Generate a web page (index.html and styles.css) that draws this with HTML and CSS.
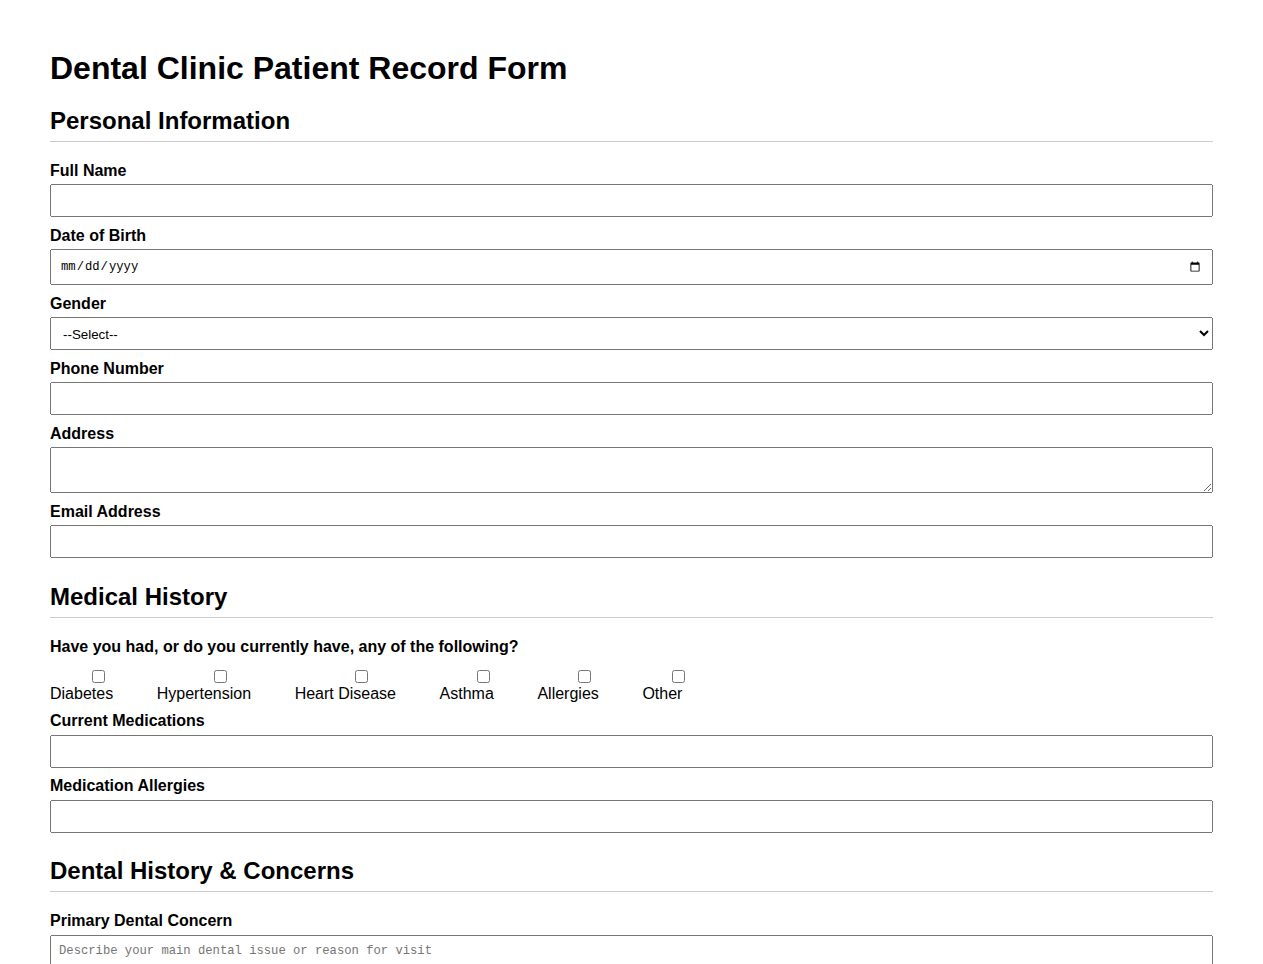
FILE: index.html
```html
<!DOCTYPE html>
<html lang="en">
<head>
<meta charset="utf-8">
<title>Dental Clinic Patient Record Form</title>
<link rel="stylesheet" href="styles.css">
</head>
<body>
<div class="page">
  <h1 class="title">Dental Clinic Patient Record Form</h1>
  <form class="form">
    <section class="section">
      <h2 class="section-title">Personal Information</h2>
      <div class="group">
        <label class="field-label" for="name">Full Name</label>
        <input class="field" type="text" id="name">
      </div>
      <div class="group">
        <label class="field-label" for="dob">Date of Birth</label>
        <input class="field field-date" type="date" id="dob">
      </div>
      <div class="group">
        <label class="field-label" for="gender">Gender</label>
        <select class="field" id="gender">
          <option>--Select--</option>
          <option>Male</option>
          <option>Female</option>
          <option>Other</option>
        </select>
      </div>
      <div class="group">
        <label class="field-label" for="phone">Phone Number</label>
        <input class="field" type="tel" id="phone">
      </div>
      <div class="group">
        <label class="field-label" for="address">Address</label>
        <textarea class="field area area-small" id="address"></textarea>
      </div>
      <div class="group">
        <label class="field-label" for="email">Email Address</label>
        <input class="field" type="email" id="email">
      </div>
    </section>

    <section class="section">
      <h2 class="section-title">Medical History</h2>
      <div class="group">
        <div class="field-label question">Have you had, or do you currently have, any of the following?</div>
        <div class="checks">
          <label class="check"><input class="check-box" type="checkbox"><span>Diabetes</span></label>
          <label class="check"><input class="check-box" type="checkbox"><span>Hypertension</span></label>
          <label class="check"><input class="check-box" type="checkbox"><span>Heart Disease</span></label>
          <label class="check"><input class="check-box" type="checkbox"><span>Asthma</span></label>
          <label class="check"><input class="check-box" type="checkbox"><span>Allergies</span></label>
          <label class="check"><input class="check-box" type="checkbox"><span>Other</span></label>
        </div>
      </div>
      <div class="group">
        <label class="field-label" for="meds">Current Medications</label>
        <input class="field" type="text" id="meds">
      </div>
      <div class="group">
        <label class="field-label" for="medall">Medication Allergies</label>
        <input class="field" type="text" id="medall">
      </div>
    </section>

    <section class="section">
      <h2 class="section-title">Dental History &amp; Concerns</h2>
      <div class="group">
        <label class="field-label" for="concern">Primary Dental Concern</label>
        <textarea class="field area area-large" id="concern" placeholder="Describe your main dental issue or reason for visit"></textarea>
      </div>
      <div class="group">
        <label class="field-label" for="lastvisit">Date of Last Dental Visit</label>
        <input class="field field-date" type="date" id="lastvisit">
      </div>
      <div class="group">
        <label class="field-label" for="notes">Additional Notes</label>
        <textarea class="field area area-large" id="notes"></textarea>
      </div>
      <button class="submit" type="submit">Submit</button>
    </section>
  </form>
</div>
</body>
</html>
```

FILE: styles.css
```css
html, body {
  margin: 0;
  padding: 0;
  background: #ffffff;
}

body {
  font-family: "Liberation Sans", Arial, sans-serif;
  font-size: 16px;
  color: #000000;
}

.page {
  padding: 50px;
}

.title {
  font-size: 32px;
  font-weight: bold;
  margin: 0 0 20px;
}

.section + .section {
  margin-top: 24.5px;
}

.section-title {
  font-size: 24px;
  font-weight: bold;
  margin: 0 0 20px;
  padding-bottom: 6px;
  border-bottom: 1px solid #cccccc;
}

.group {
  margin-bottom: 9.6px;
}

.field-label {
  display: block;
  font-weight: bold;
  margin-bottom: 4.4px;
}

.question {
  margin-bottom: 11px;
}

.field {
  display: block;
  width: 100%;
  height: 33px;
  box-sizing: border-box;
  padding: 8px;
  margin: 0;
  font-family: "Liberation Sans", Arial, sans-serif;
  font-size: 13.333px;
  line-height: 15px;
}

.field-date {
  height: 36px;
  font-family: "Liberation Mono", monospace;
  font-size: 12.2px;
}

.area {
  font-family: "Liberation Mono", monospace;
  font-size: 12.2px;
}

.area-small {
  height: 46px;
}

.area-large {
  height: 80px;
}

.checks {
  display: flex;
  flex-wrap: wrap;
  column-gap: 43.6px;
  margin-bottom: 2.5px;
}

.check {
  display: inline-flex;
  flex-direction: column;
  align-items: flex-start;
}

.check-box {
  margin: 3px 0 2px calc(50% + 10px);
}

.submit {
  margin-top: 12px;
  padding: 10px 20px;
  font-size: 16px;
}
```
